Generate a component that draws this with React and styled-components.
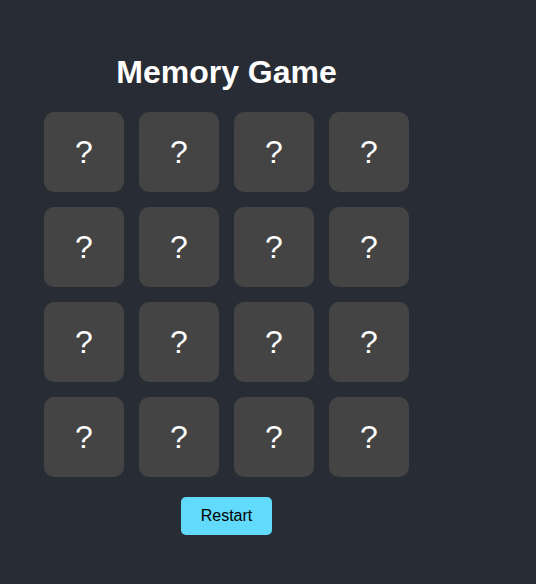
import React, { useState } from "react";
import styled, { createGlobalStyle } from "styled-components";

const GlobalStyle = createGlobalStyle`
  html, body {
    margin: 0;
    padding: 0;
    background-color: #282c34;
    font-family: "Liberation Sans", Arial, sans-serif;
  }
`;

const CARD_COUNT = 16;

function App() {
  const [cards] = useState(() =>
    Array.from({ length: CARD_COUNT }, (_, idx) => ({ id: idx, flipped: false }))
  );

  return (
    <Page>
      <GlobalStyle />
      <Column>
        <Title>Memory Game</Title>
        <Board>
          {cards.map((card) => (
            <Card key={card.id}>{card.flipped ? "" : "?"}</Card>
          ))}
        </Board>
        <RestartButton>Restart</RestartButton>
      </Column>
    </Page>
  );
}

const Page = styled.div`
  min-height: 584px;
  background-color: #282c34;
  padding-top: 54px;
  box-sizing: border-box;
`;

const Column = styled.div`
  width: 453px;
  display: flex;
  flex-direction: column;
  align-items: center;
`;

const Title = styled.h1`
  margin: 0 0 21px 0;
  color: #ffffff;
  font-size: 32px;
  font-weight: bold;
`;

const Board = styled.div`
  display: grid;
  grid-template-columns: repeat(4, 80px);
  grid-auto-rows: 80px;
  gap: 15px;
`;

const Card = styled.div`
  background-color: #444444;
  border-radius: 10px;
  display: flex;
  align-items: center;
  justify-content: center;
  color: #ffffff;
  font-size: 32px;
  cursor: pointer;
`;

const RestartButton = styled.button`
  margin-top: 20px;
  padding: 10px 20px;
  border: none;
  border-radius: 5px;
  background-color: #61dafb;
  color: #000000;
  font-family: "Liberation Sans", Arial, sans-serif;
  font-size: 16px;
  cursor: pointer;
`;

export default App;
